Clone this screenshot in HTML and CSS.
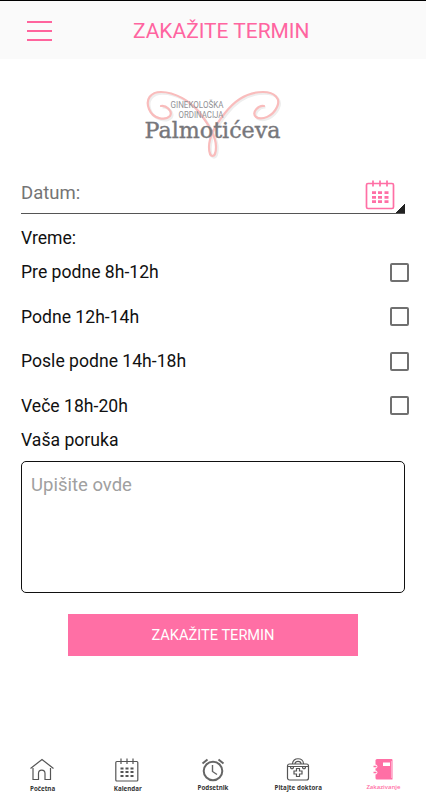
FILE: index.html
```html
<!DOCTYPE html>
<html lang="sr">
<head>
  <meta charset="UTF-8" />
  <meta name="viewport" content="width=device-width, initial-scale=1.0"/>
  <title>Zakažite termin</title>
  <link rel="stylesheet" href="styles.css">
</head>
<body>
  <header class="header">
    <button class="menu-btn" aria-label="Meni">
      <span></span>
      <span></span>
      <span></span>
    </button>
    <h1 class="header-title">ZAKAŽITE TERMIN</h1>
  </header>

  <main class="content">
    <svg class="logo" width="144" height="72" viewBox="0 0 144 72">
      <path class="logo-shadow" transform="translate(1.5 1.5)" d="M20 19C25 18 32 24 29 29C24 34 12 32 8 22C4 12 10 5 20 5C34 5 49 14 58 25C68 38 75 49 75 60C75 72 68 72 68 60C68 49 76 36 84 26C94 13 107 5 122 5C134 5 140 12 136 20C132 29 121 34 115 30C110 25 118 18 123 19"/>
      <path class="logo-line" d="M20 19C25 18 32 24 29 29C24 34 12 32 8 22C4 12 10 5 20 5C34 5 49 14 58 25C68 38 75 49 75 60C75 72 68 72 68 60C68 49 76 36 84 26C94 13 107 5 122 5C134 5 140 12 136 20C132 29 121 34 115 30C110 25 118 18 123 19"/>
      <text class="logo-small" x="29.500" y="21.300" textLength="53" lengthAdjust="spacingAndGlyphs">GINEKOLOŠKA</text>
      <text class="logo-small" x="37.500" y="30.800" textLength="45" lengthAdjust="spacingAndGlyphs">ORDINACIJA</text>
      <text class="logo-name" x="3.500" y="51" textLength="136" lengthAdjust="spacingAndGlyphs">Palmotićeva</text>
    </svg>

    <form class="form">
      <div class="date-field">
        <span class="date-label">Datum:</span>
        <svg class="date-icon" width="30" height="30" viewBox="0 0 30 30">
          <rect x="1.500" y="3.500" width="27" height="25" rx="1.500"/>
          <path d="M8 .5v6M15 .5v6M22 .5v6"/>
          <path class="days" d="M7 12.700h4M13 12.700h4M19.500 12.700h4M7 17.300h4M13 17.300h4M19.500 17.300h4M7 21.700h4M13 21.700h4M19.500 21.700h4"/>
        </svg>
      </div>

      <div class="group-label">Vreme:</div>
      <label class="time-row">Pre podne 8h-12h <input type="checkbox" class="time-check"></label>
      <label class="time-row">Podne 12h-14h <input type="checkbox" class="time-check"></label>
      <label class="time-row">Posle podne 14h-18h <input type="checkbox" class="time-check"></label>
      <label class="time-row">Veče 18h-20h <input type="checkbox" class="time-check"></label>

      <label class="message-label" for="poruka">Vaša poruka</label>
      <textarea class="message" id="poruka" placeholder="Upišite ovde"></textarea>
      <button type="button" class="submit-btn">ZAKAŽITE TERMIN</button>
    </form>
  </main>

  <nav class="bottom-nav">
    <a class="nav-item">
      <svg width="26" height="26" viewBox="0 0 26 26">
        <path d="M1.500 11.500L13 2.500l11.500 9M4 11v11.500h5.500v-6c0-4.500 6.500-4.500 6.500 0v6h5.500V11"/>
      </svg>
      <span class="nav-text nav-low">Početna</span>
    </a>
    <a class="nav-item">
      <svg width="26" height="26" viewBox="0 0 26 26">
        <rect x="1.800" y="4.500" width="22" height="19.500" rx="1"/>
        <path d="M7 1.500v5.500M13 1.500v5.500M19 1.500v5.500"/>
        <path class="days" d="M6.500 11.500h3M11.500 11.500h3M16.500 11.500h3M6.500 15h3M11.500 15h3M16.500 15h3M6.500 19h3M11.500 19h3M16.500 19h3"/>
      </svg>
      <span class="nav-text nav-low">Kalendar</span>
    </a>
    <a class="nav-item">
      <svg class="clock" width="26" height="26" viewBox="0 0 26 26">
        <circle cx="13" cy="14" r="9.300"/>
        <path d="M2.500 6.500L7.500 2.500M23.500 6.500L18.500 2.500"/>
        <path class="hands" d="M12.500 8v6.500l4.500 3"/>
      </svg>
      <span class="nav-text">Podsetnik</span>
    </a>
    <a class="nav-item">
      <svg width="26" height="26" viewBox="0 0 26 26">
        <rect x="2.500" y="7" width="21" height="16" rx="2"/>
        <path d="M7.500 7c0-7 11-7 11 0M10 7c0-3.500 6-3.500 6 0M3 9.500h20M5.500 9.500c0 3 3 3 3 0M17.500 9.500c0 3 3 3 3 0"/>
        <path d="M11.500 11.500h3v2.500h2.500v3h-2.500v2.500h-3V17H9v-3h2.500z"/>
      </svg>
      <span class="nav-text nav-wide">Pitajte doktora</span>
    </a>
    <a class="nav-item active">
      <svg class="book" width="26" height="26" viewBox="0 0 26 26">
        <path d="M7 2h14.500q1 0 1 1v19.500H7q-1.500 0-1.500-1.500V3.500Q5.500 2 7 2z"/>
        <path class="book-page" d="M13 5.500h7v3.500h-7zM21 4h.4v17H21z"/>
        <circle class="book-page" cx="5.500" cy="9.500" r="1.900"/>
        <circle class="book-page" cx="5.500" cy="15.500" r="1.900"/>
        <path d="M3.500 8.700h3v1.600h-3zM3.500 14.700h3v1.600h-3z"/>
      </svg>
      <span class="nav-text nav-light">Zakazivanje</span>
    </a>
  </nav>
</body>
</html>
```
FILE: styles.css
```css
* {
  box-sizing: border-box;
}

body {
  margin: 0;
  height: 800px;
  display: flex;
  flex-direction: column;
  background-color: #fff;
  color: #111;
  font-family: Roboto, "Liberation Sans", sans-serif;
  font-size: 17.600px;
  overflow: hidden;
}

.header {
  height: 59px;
  display: flex;
  align-items: center;
  padding: 2px 27px 0;
  border-top: 1px solid #000;
  background-color: #fafafa;
}

.menu-btn {
  width: 25px;
  padding: 0;
  border: none;
  background: none;
  display: flex;
  flex-direction: column;
  gap: 7.200px;
}

.menu-btn span {
  height: 2px;
  background-color: #ff649d;
}

.header-title {
  margin: 0 0 0 81px;
  font-size: 20.950px;
  font-weight: 400;
  line-height: 26px;
  color: #ff64a0;
}

.content {
  flex: 1;
  display: flex;
  flex-direction: column;
  padding: 28px 21px 0;
}

.logo {
  margin-left: 120px;
}

.logo-line {
  fill: none;
  stroke: #f9bcbc;
  stroke-width: 2.200;
  stroke-linecap: round;
}

.logo-shadow {
  fill: none;
  stroke: #eee;
  stroke-width: 2.500;
}

.logo-small {
  font-size: 8.400px;
  fill: #919195;
}

.logo-name {
  font-family: "DejaVu Serif", serif;
  font-size: 22.800px;
  fill: #77777b;
  stroke: #77777b;
  stroke-width: .4;
}

.form {
  display: flex;
  flex-direction: column;
}

.date-field {
  height: 43px;
  margin-top: 12px;
  padding: 9px 9px 0 0;
  display: flex;
  justify-content: space-between;
  align-items: flex-start;
  border-bottom: 1px solid #555;
  /* dark corner of the spinner */
  background: linear-gradient(135deg, transparent 50%, #222 50%) right bottom / 10px 9px no-repeat;
}

.date-label {
  line-height: 26px;
  font-size: 18.500px;
  color: #757575;
}

.date-icon {
  margin-right: 1px;
  fill: none;
  stroke: #ff6fa5;
  stroke-width: 1.700;
}

.date-icon .days {
  stroke-width: 2.800;
}

.group-label {
  height: 36px;
  line-height: 49px;
}

.time-row {
  height: 44.500px;
  display: flex;
  justify-content: space-between;
  align-items: center;
  margin-right: -4px;
}

.time-check {
  appearance: none;
  width: 19px;
  height: 19px;
  margin: 0;
  border: 2px solid #707070;
  border-radius: 2px;
}

.message-label {
  line-height: 24px;
}

.message {
  height: 132px;
  margin-top: 9px;
  padding: 10px 9px;
  border: 1px solid #111;
  border-radius: 5px;
  font-family: inherit;
  font-size: 18.500px;
  line-height: 26px;
  resize: none;
}

.message::placeholder {
  color: #a0a0a0;
}

.submit-btn {
  width: 290px;
  height: 42px;
  margin: 21px 0 0 47px;
  padding: 0;
  border: none;
  background-color: #ff6fa5;
  color: #fff;
  font-family: inherit;
  font-size: 14.600px;
}

.bottom-nav {
  height: 43px;
  display: flex;
}

.nav-item {
  flex: 1;
  display: flex;
  flex-direction: column;
  align-items: center;
  color: #333;
}

.nav-item svg {
  margin-right: 1px;
  fill: none;
  stroke: #555;
  stroke-width: 1.200;
}

.nav-item .days {
  stroke-width: 2;
}

.nav-item .clock {
  stroke: #666;
  stroke-width: 2;
}

.clock .hands {
  stroke-width: 1.400;
}

.nav-item .book {
  fill: #ff6fa5;
  stroke: none;
}

.book .book-page {
  fill: #fff;
}

.nav-text {
  font-family: "Open Sans", sans-serif;
  font-size: 6.200px;
  font-weight: 700;
  line-height: 9px;
}

.nav-low {
  padding-top: 1px;
}

.nav-wide {
  letter-spacing: .05px;
}

.nav-light {
  font-size: 6px;
  font-weight: 600;
}

.active {
  color: #ff6fa5;
}
```
